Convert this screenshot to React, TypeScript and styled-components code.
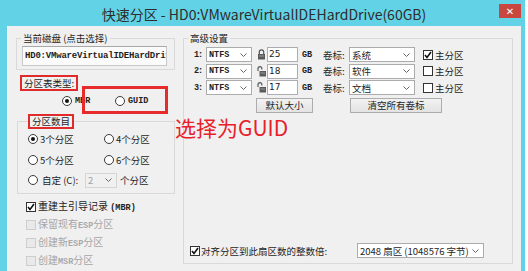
import styled, { createGlobalStyle } from "styled-components";

const GlobalStyle = createGlobalStyle`
  html, body {
    margin: 0;
    padding: 0;
    background: #ffffff;
  }
  body {
    font-family: "Noto Sans CJK SC", "Noto Sans", sans-serif;
    font-size: 9.5px;
    color: #1e1e1e;
    overflow: hidden;
  }
`;

const Window = styled.div`
  width: 525px;
  height: 271px;
  box-sizing: border-box;
  background: #62d3e6;
  padding: 0 4px 0 7px;
  display: flex;
  flex-direction: column;
  overflow: hidden;
`;

const TitleBar = styled.div`
  height: 26px;
  flex: none;
  display: grid;
  grid-template-columns: 1fr auto 1fr;
  align-items: center;
`;

const Title = styled.div`
  grid-column: 2;
  font-size: 14px;
  color: #2d2d2d;
  white-space: nowrap;
  padding-top: 2px;
`;

const Close = styled.div`
  grid-column: 3;
  justify-self: end;
  align-self: start;
  margin-top: 4px;
  width: 22px;
  height: 14px;
  background: #c9473e;
  color: #fff;
  font-family: "DejaVu Sans", sans-serif;
  font-size: 10px;
  font-weight: bold;
  display: flex;
  align-items: center;
  justify-content: center;
`;

const Body = styled.div`
  flex: 1;
  background: #f0f0f0;
  border-left: 1px solid #f9f9f9;
  padding: 5px 8px 0 8px;
  display: flex;
  gap: 8px;
  position: relative;
`;

const LeftCol = styled.div`
  width: 159px;
  flex: none;
  display: flex;
  flex-direction: column;
  position: relative;
`;

const Group = styled.fieldset`
  margin: 0;
  padding: 0;
  border: 1px solid #d9d9d9;
  min-inline-size: 0;
`;

const Legend = styled.legend<{ $marked?: boolean }>`
  margin-left: ${(p) => (p.$marked ? "0" : "4px")};
  padding: 0 2px;
  line-height: ${(p) => (p.$marked ? "11px" : "14px")};
  border: ${(p) => (p.$marked ? "2px solid #e12a2a" : "none")};
`;

const DiskGroup = styled(Group)`
  padding-bottom: 3px;
`;

const DiskBox = styled.div`
  margin: 1px 0 0 5px;
  width: 145px;
  height: 20px;
  box-sizing: border-box;
  border: 1px solid #c8c8c8;
  border-top-color: #a8a8a8;
  background: #fbfbfb;
  font-family: "Liberation Mono", monospace;
  font-weight: bold;
  font-size: 9px;
  letter-spacing: -0.2px;
  line-height: 18px;
  padding-left: 2px;
  white-space: nowrap;
  overflow: hidden;
`;

const MarkedLabel = styled.div`
  margin: 5px 0 0 4px;
  align-self: flex-start;
  border: 2px solid #e12a2a;
  padding: 0 2px;
  line-height: 12px;
`;

const TypeRow = styled.div`
  margin-top: 4px;
  height: 12px;
  display: flex;
  align-items: center;
  padding-left: 46px;
`;

const TypeOption = styled.div<{ $w: number }>`
  width: ${(p) => p.$w}px;
  display: flex;
  align-items: center;
  gap: 2px;
`;

const Mono = styled.span<{ $gray?: boolean }>`
  font-family: "Liberation Mono", monospace;
  font-weight: bold;
  font-size: 8.5px;
  color: ${(p) => (p.$gray ? "#a9a9a9" : "#222")};
`;

const RowNum = styled(Mono)`
  letter-spacing: -1px;
`;

const Annotation = styled.div`
  position: absolute;
  left: 66px;
  top: 55px;
  width: 86px;
  height: 28px;
  box-sizing: border-box;
  border: 3px solid #e52b2b;
`;

const CountGroup = styled(Group)`
  margin: 7px 0 0 1px;
  padding: 3px 0 6px 10px;
  display: grid;
  grid-template-columns: 76px auto;
  grid-auto-rows: 14px;
  row-gap: 6.5px;
`;

const RadioItem = styled.div`
  display: flex;
  align-items: center;
  gap: 1px;
  white-space: nowrap;
`;

const CustomRow = styled.div`
  grid-column: 1 / span 2;
  display: flex;
  align-items: center;
  white-space: nowrap;
`;

const CustomText = styled.span`
  width: 46px;
  padding-left: 3px;
  box-sizing: border-box;
`;

const Radio = styled.span<{ $checked?: boolean }>`
  width: 10px;
  height: 10px;
  box-sizing: border-box;
  border: 1px solid #3a3a3a;
  border-radius: 50%;
  background: #fff;
  flex: none;
  position: relative;
  margin-right: 1px;
  &::after {
    content: "";
    position: absolute;
    inset: 2px;
    border-radius: 50%;
    background: ${(p) => (p.$checked ? "#111" : "transparent")};
  }
`;

const Check = styled.span<{ $disabled?: boolean }>`
  width: 10px;
  height: 10px;
  box-sizing: border-box;
  border: 1px solid ${(p) => (p.$disabled ? "#cdcdcd" : "#333")};
  background: ${(p) => (p.$disabled ? "#e9e9e9" : "#fff")};
  flex: none;
  display: flex;
  align-items: center;
  justify-content: center;
`;

const CheckList = styled.div`
  margin-top: 6px;
  padding-left: 10px;
  display: flex;
  flex-direction: column;
  gap: 4px;
`;

const CheckItem = styled.div<{ $disabled?: boolean }>`
  height: 14px;
  display: flex;
  align-items: center;
  gap: 2px;
  font-size: 10px;
  white-space: nowrap;
  color: ${(p) => (p.$disabled ? "#a5a5a5" : "#1e1e1e")};
`;

const LabelText = styled.span`
  line-height: 14px;
`;

const Combo = styled.div<{ $w: number; $disabled?: boolean }>`
  width: ${(p) => p.$w}px;
  height: 15px;
  box-sizing: border-box;
  border: 1px solid ${(p) => (p.$disabled ? "#d5d5d5" : "#acacac")};
  background: ${(p) => (p.$disabled ? "#f0f0f0" : "#fff")};
  color: ${(p) => (p.$disabled ? "#a0a0a0" : "#1e1e1e")};
  display: flex;
  align-items: center;
  justify-content: space-between;
  padding: 0 4px 0 2px;
  white-space: nowrap;
  flex: none;
`;

const RightGroup = styled(Group)`
  flex: 1;
  height: 233px;
  box-sizing: border-box;
  display: flex;
  flex-direction: column;
  padding: 0 0 5px 0;
`;

const PartRows = styled.div`
  margin-top: 2px;
  padding-left: 10px;
  display: grid;
  grid-template-columns: 12px 46px 15px 31px 25px 26px 66px auto;
  grid-auto-rows: 15px;
  row-gap: 1.5px;
  align-items: center;
`;

const Cell = styled.div<{ $pad?: number; $end?: boolean }>`
  display: flex;
  align-items: center;
  justify-content: ${(p) => (p.$end ? "flex-end" : "flex-start")};
  padding-left: ${(p) => p.$pad ?? 0}px;
  padding-right: ${(p) => (p.$end ? 1 : 0)}px;
  gap: 2px;
  white-space: nowrap;
  height: 15px;
`;

const SizeInput = styled.div`
  width: 31px;
  height: 15px;
  box-sizing: border-box;
  border: 1px solid #abadb3;
  background: #fff;
  font-family: "DejaVu Sans", sans-serif;
  font-size: 9px;
  line-height: 13px;
  padding-left: 1px;
`;

const ButtonRow = styled.div`
  margin-top: 3px;
  padding-left: 72px;
  display: flex;
  gap: 37px;
`;

const Button = styled.div<{ $w: number }>`
  width: ${(p) => p.$w}px;
  height: 15px;
  box-sizing: border-box;
  border: 1px solid #adadad;
  background: linear-gradient(#f2f2f2, #e3e3e3);
  display: flex;
  align-items: center;
  justify-content: center;
  line-height: 13px;
`;

const AlignRow = styled.div`
  margin-top: auto;
  padding-left: 6px;
  height: 15px;
  display: flex;
  align-items: center;
  gap: 1px;
  white-space: nowrap;
`;

const AlignText = styled.span`
  width: 155px;
  flex: none;
`;

const Note = styled.div`
  position: absolute;
  left: 167px;
  top: 88px;
  font-size: 21px;
  line-height: 26px;
  color: #e8202a;
  white-space: nowrap;
`;

function Arrow() {
  return (
    <svg width="7" height="4" viewBox="0 0 7 4">
      <path d="M0.5 0.5 L3.5 3.5 L6.5 0.5" fill="none" stroke="#666" strokeWidth="1" />
    </svg>
  );
}

function Tick() {
  return (
    <svg width="8" height="8" viewBox="0 0 8 8">
      <path d="M1 4 L3 6.5 L7 1" fill="none" stroke="#111" strokeWidth="1.6" />
    </svg>
  );
}

function Lock({ open }: { open?: boolean }) {
  return (
    <svg width="9" height="11" viewBox="0 0 9 11">
      {open ? (
        <path d="M1 5 V2.6 a1.9 1.9 0 0 1 3.8 0 V3.5" fill="none" stroke="#555" strokeWidth="1.2" />
      ) : (
        <path d="M2.3 5 V3 a2.2 2.2 0 0 1 4.4 0 V5" fill="none" stroke="#555" strokeWidth="1.2" />
      )}
      <rect x={open ? 2.5 : 1} y="5" width={open ? 6.5 : 7} height="5.5" fill="#5a5a5a" />
      <rect x={open ? 3.5 : 2} y="6.5" width={open ? 4.5 : 5} height="1" fill="#9a9a9a" />
    </svg>
  );
}

const parts = [
  { n: "1:", size: "25", label: "系统", primary: true, locked: true },
  { n: "2:", size: "18", label: "软件", primary: false, locked: false },
  { n: "3:", size: "17", label: "文档", primary: false, locked: false },
];

export default function App() {
  return (
    <>
      <GlobalStyle />
      <Window>
        <TitleBar>
          <Title>快速分区 - HD0:VMwareVirtualIDEHardDrive(60GB)</Title>
          <Close>✕</Close>
        </TitleBar>
        <Body>
          <LeftCol>
            <DiskGroup>
              <Legend>当前磁盘 (点击选择)</Legend>
              <DiskBox>HD0:VMwareVirtualIDEHardDrive(60GB)</DiskBox>
            </DiskGroup>
            <MarkedLabel>分区表类型:</MarkedLabel>
            <TypeRow>
              <TypeOption $w={53}>
                <Radio $checked />
                <Mono>MBR</Mono>
              </TypeOption>
              <TypeOption $w={40}>
                <Radio />
                <Mono>GUID</Mono>
              </TypeOption>
            </TypeRow>
            <Annotation />
            <CountGroup>
              <Legend $marked>分区数目</Legend>
              <RadioItem>
                <Radio $checked />
                3个分区
              </RadioItem>
              <RadioItem>
                <Radio />
                4个分区
              </RadioItem>
              <RadioItem>
                <Radio />
                5个分区
              </RadioItem>
              <RadioItem>
                <Radio />
                6个分区
              </RadioItem>
              <CustomRow>
                <Radio />
                <CustomText>自定 (C):</CustomText>
                <Combo $w={32} $disabled>
                  2
                  <Arrow />
                </Combo>
                <CustomText>个分区</CustomText>
              </CustomRow>
            </CountGroup>
            <CheckList>
              <CheckItem>
                <Check>
                  <Tick />
                </Check>
                <LabelText>
                  重建主引导记录 <Mono>(MBR)</Mono>
                </LabelText>
              </CheckItem>
              <CheckItem $disabled>
                <Check $disabled />
                <LabelText>
                  保留现有<Mono $gray>ESP</Mono>分区
                </LabelText>
              </CheckItem>
              <CheckItem $disabled>
                <Check $disabled />
                <LabelText>
                  创建新<Mono $gray>ESP</Mono>分区
                </LabelText>
              </CheckItem>
              <CheckItem $disabled>
                <Check $disabled />
                <LabelText>
                  创建<Mono $gray>MSR</Mono>分区
                </LabelText>
              </CheckItem>
            </CheckList>
          </LeftCol>
          <RightGroup>
            <Legend>高级设置</Legend>
            <PartRows>
              {parts.map((p) => (
                <>
                  <Cell key={p.n + "n"}>
                    <RowNum>{p.n}</RowNum>
                  </Cell>
                  <Combo $w={46}>
                    <Mono>NTFS</Mono>
                    <Arrow />
                  </Combo>
                  <Cell $end>
                    <Lock open={!p.locked} />
                  </Cell>
                  <SizeInput>{p.size}</SizeInput>
                  <Cell $pad={4}>
                    <Mono>GB</Mono>
                  </Cell>
                  <Cell>卷标:</Cell>
                  <Combo $w={66}>
                    {p.label}
                    <Arrow />
                  </Combo>
                  <Cell $pad={8}>
                    <Check>{p.primary && <Tick />}</Check>
                    主分区
                  </Cell>
                </>
              ))}
            </PartRows>
            <ButtonRow>
              <Button $w={57}>默认大小</Button>
              <Button $w={92}>清空所有卷标</Button>
            </ButtonRow>
            <AlignRow>
              <Check>
                <Tick />
              </Check>
              <AlignText>对齐分区到此扇区数的整数倍:</AlignText>
              <Combo $w={127}>
                <span>2048 扇区 (1048576 字节)</span>
                <Arrow />
              </Combo>
            </AlignRow>
          </RightGroup>
          <Note>选择为GUID</Note>
        </Body>
      </Window>
    </>
  );
}
